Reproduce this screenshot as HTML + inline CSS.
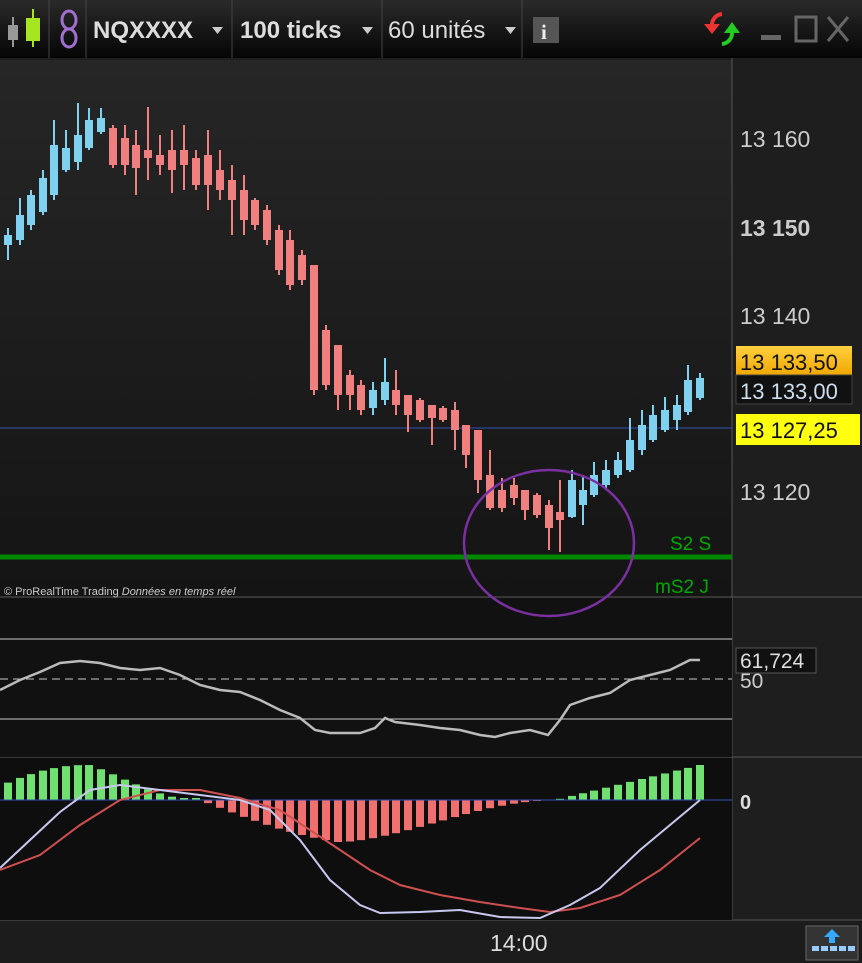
<!DOCTYPE html><html><head><meta charset="utf-8"><style>
body{margin:0;width:862px;height:963px;background:#1c1c1c;overflow:hidden;font-family:"Liberation Sans",sans-serif}
</style></head><body>
<svg id="s" width="862" height="963" xmlns="http://www.w3.org/2000/svg" style="position:absolute;left:0;top:0">
<defs><linearGradient id="tb" x1="0" y1="0" x2="0" y2="1"><stop offset="0" stop-color="#2a2a2a"/><stop offset="1" stop-color="#050505"/></linearGradient>
<linearGradient id="bg" x1="0" y1="0" x2="0" y2="1"><stop offset="0" stop-color="#262626"/><stop offset="1" stop-color="#141414"/></linearGradient>
<linearGradient id="or" x1="0" y1="0" x2="0" y2="1"><stop offset="0" stop-color="#ffd040"/><stop offset="1" stop-color="#f0a800"/></linearGradient></defs>
<rect width="862" height="963" fill="#1e1e1e"/>
<rect x="0" y="0" width="862" height="58" fill="url(#tb)"/>
<g stroke="#444"><line x1="49" y1="0" x2="49" y2="58"/><line x1="86" y1="0" x2="86" y2="58"/><line x1="232" y1="0" x2="232" y2="58"/><line x1="382" y1="0" x2="382" y2="58"/><line x1="522" y1="0" x2="522" y2="58"/></g>
<rect x="8" y="25" width="10" height="15" fill="#999"/><line x1="13" y1="17" x2="13" y2="47" stroke="#999" stroke-width="2"/>
<rect x="26" y="18" width="14" height="23" fill="#a6e620"/><line x1="33" y1="9" x2="33" y2="47" stroke="#a6e620" stroke-width="2"/>
<g fill="none" stroke="#a070d0" stroke-width="3"><ellipse cx="69" cy="20" rx="7" ry="9"/><ellipse cx="69" cy="38" rx="7" ry="9"/></g>
<text x="93" y="38" fill="#ddd" font-size="24" font-weight="bold">NQXXXX</text><path d="M212 27h11l-5.5 7z" fill="#ccc"/>
<text x="240" y="38" fill="#ddd" font-size="24" font-weight="bold">100 ticks</text><path d="M362 27h11l-5.5 7z" fill="#ccc"/>
<text x="388" y="38" fill="#ddd" font-size="24">60 unités</text><path d="M505 27h11l-5.5 7z" fill="#ccc"/>
<rect x="533" y="17" width="26" height="26" fill="#555"/><text x="541" y="39" fill="#eee" font-size="21" font-weight="bold" font-family="Liberation Serif">i</text>
<path d="M722 14a11 11 0 0 0-10 12" fill="none" stroke="#e33" stroke-width="4"/><path d="M704 24l8 10 8-10z" fill="#e33"/>
<path d="M722 44a11 11 0 0 0 10-12" fill="none" stroke="#2c2" stroke-width="4"/><path d="M724 33l8-11 8 11z" fill="#2c2"/>
<rect x="761" y="35" width="20" height="5" fill="#666"/><rect x="796" y="17" width="20" height="24" fill="none" stroke="#666" stroke-width="3"/>
<path d="M828 17l20 24M848 17l-20 24" stroke="#666" stroke-width="3"/>
<rect x="0" y="60" width="732" height="537" fill="url(#bg)"/>
<line x1="732" y1="58" x2="732" y2="920" stroke="#555"/>
<line x1="0" y1="597" x2="862" y2="597" stroke="#555"/><line x1="0" y1="757" x2="862" y2="757" stroke="#555"/><line x1="0" y1="920" x2="862" y2="920" stroke="#555"/>
<rect x="0" y="598" width="732" height="159" fill="#111"/><rect x="0" y="758" width="732" height="162" fill="#0e0e0e"/>
<g fill="#ccc" font-size="23"><text x="740" y="147">13 160</text><text x="740" y="236" font-weight="bold">13 150</text><text x="740" y="324">13 140</text><text x="740" y="500">13 120</text></g>
<line x1="0" y1="428" x2="732" y2="428" stroke="#3050b0"/>
<line x1="0" y1="557" x2="732" y2="557" stroke="#008800" stroke-width="5"/>
<text x="670" y="550" fill="#0a0" font-size="19">S2 S</text><text x="655" y="593" fill="#0a0" font-size="19">mS2 J</text>
<text x="4" y="595" fill="#ccc" font-size="11">© ProRealTime Trading <tspan font-style="italic">Données en temps réel</tspan></text>
<g id="c"></g>
<ellipse cx="549" cy="543" rx="85" ry="73" fill="none" stroke="#7a30a0" stroke-width="2.5"/>
<rect x="736" y="346" width="116" height="29" fill="url(#or)"/><text x="740" y="370" font-size="22" fill="#111">13 133,50</text>
<rect x="736" y="375" width="116" height="29" fill="#111" stroke="#444"/><text x="740" y="399" font-size="22" fill="#cde">13 133,00</text>
<rect x="736" y="414" width="124" height="31" fill="#ffff10"/><text x="740" y="438" font-size="22" fill="#111">13 127,25</text>
<line x1="0" y1="639" x2="732" y2="639" stroke="#ccc"/><line x1="0" y1="679" x2="732" y2="679" stroke="#ccc" stroke-dasharray="8 5"/><line x1="0" y1="719" x2="732" y2="719" stroke="#ccc"/>
<text x="740" y="688" fill="#ccc" font-size="21">50</text>
<rect x="736" y="648" width="80" height="25" fill="#111" stroke="#555"/><text x="740" y="668" fill="#ddd" font-size="21">61,724</text>
<polyline fill="none" stroke="#bbb" stroke-width="2.5" points="0,690 20,680 40,672 60,663 80,661 100,663 120,668 140,670 160,668 180,675 200,685 220,690 240,692 260,700 280,710 300,718 315,730 330,733 360,733 375,728 385,718 395,722 420,725 440,728 460,730 480,735 495,737 510,733 530,730 548,735 560,720 570,705 590,698 610,693 630,680 650,675 670,670 690,660 700,660"/>
<g id="h"></g>
<line x1="0" y1="800" x2="732" y2="800" stroke="#3050b0"/>
<polyline fill="none" stroke="#d05050" stroke-width="2" points="0,870 40,855 80,825 120,800 160,790 200,790 240,798 280,810 310,830 340,850 370,870 400,885 440,895 480,902 520,908 550,912 580,908 620,895 660,870 700,838"/>
<polyline fill="none" stroke="#c8c8f0" stroke-width="2" points="0,868 30,840 60,812 90,790 120,785 160,790 200,795 240,800 270,810 300,840 330,880 360,905 380,913 420,912 460,910 500,917 540,918 570,905 600,888 640,850 670,825 700,800"/>
<text x="740" y="809" fill="#ddd" font-size="20" font-weight="bold">0</text>
<rect x="0" y="921" width="862" height="42" fill="#1c1c1c"/>
<text x="490" y="951" fill="#ddd" font-size="23">14:00</text>
<rect x="806" y="926" width="52" height="34" fill="#333" stroke="#666"/><path d="M832 929l-8 8h5v6h6v-6h5z" fill="#3af"/>
<g fill="#9cf"><rect x="812" y="946" width="7" height="5"/><rect x="821" y="946" width="7" height="5"/><rect x="830" y="946" width="7" height="5"/><rect x="839" y="946" width="7" height="5"/><rect x="848" y="946" width="7" height="5"/></g>
</svg>
<script>
var d=[[8,245,235,228,260],[20,240,215,198,245],[31,225,195,190,230],[43,212,178,170,215],[54,195,145,120,200],[66,170,148,130,172],[78,162,135,103,170],[89,148,120,108,150],[101,132,118,108,134],
[113,128,165,125,168,1],[125,138,165,125,175,1],[136,145,168,130,195,1],[148,150,158,107,180,1],[160,155,165,135,175,1],[172,150,170,130,193,1],[184,150,165,125,190,1],[196,158,185,150,190,1],[208,155,185,130,210,1],[220,170,190,150,200,1],[232,180,200,165,235,1],[244,190,220,175,235,1],[255,200,225,198,230,1],[267,210,240,205,245,1],[279,230,270,225,275,1],[290,240,285,230,290,1],[302,255,280,250,285,1],[314,265,390,265,395,1],[326,330,385,325,390,1],[338,345,395,345,410,1],[350,375,395,370,410,1],[361,385,410,380,415,1],[373,408,390,382,415],[385,400,382,358,405],[396,390,405,370,415,1],[408,395,415,395,432,1],[420,400,420,398,422,1],[432,405,418,405,445,1],[443,408,420,406,422,1],[455,410,430,402,450,1],[466,425,455,425,468,1],[478,430,480,430,493,1],[490,475,508,450,510,1],[502,490,508,478,512,1],[514,485,498,478,505,1],[525,490,510,495,520,1],[537,495,515,493,518,1],[549,505,528,500,550,1],[560,512,520,480,552,1],
[572,517,480,470,518],[583,505,490,475,525],[594,495,475,462,497],[606,485,470,460,490],[618,475,460,452,478],[630,470,440,418,472],[642,450,425,410,455],[653,440,415,405,442],[665,430,410,397,432],[677,420,405,395,430],[688,412,380,365,415],[700,398,378,373,400]];
var s='',h='';
d.forEach(function(c,i){var r=c[5],col=r?'#f08080':'#80d0f0',t=Math.min(c[1],c[2]),b=Math.max(c[1],c[2]);
s+='<line x1="'+c[0]+'" y1="'+c[3]+'" x2="'+c[0]+'" y2="'+c[4]+'" stroke="'+col+'" stroke-width="2"/><rect x="'+(c[0]-4)+'" y="'+t+'" width="8" height="'+Math.max(3,b-t)+'" fill="'+col+'"/>';
var x=c[0],v;
if(x<200)v=35*Math.sin(Math.PI*Math.min(1,(x+30)/230))*(x>90?(200-x)/110:1);else if(x<560)v=-45*Math.sin(Math.PI*(x-200)/360)*(x<340?1:Math.max(0.1,(560-x)/220));else v=35*(x-555)/145;
if(x<200)v=Math.max(2,v);
var y=v>0?800-v:800,hh=Math.abs(v);h+='<rect x="'+(x-4)+'" y="'+y+'" width="8" height="'+hh+'" fill="'+(v>0?'#70e070':'#f07070')+'"/>';});
document.getElementById('c').innerHTML=s;document.getElementById('h').innerHTML=h;
</script>
</body></html>
